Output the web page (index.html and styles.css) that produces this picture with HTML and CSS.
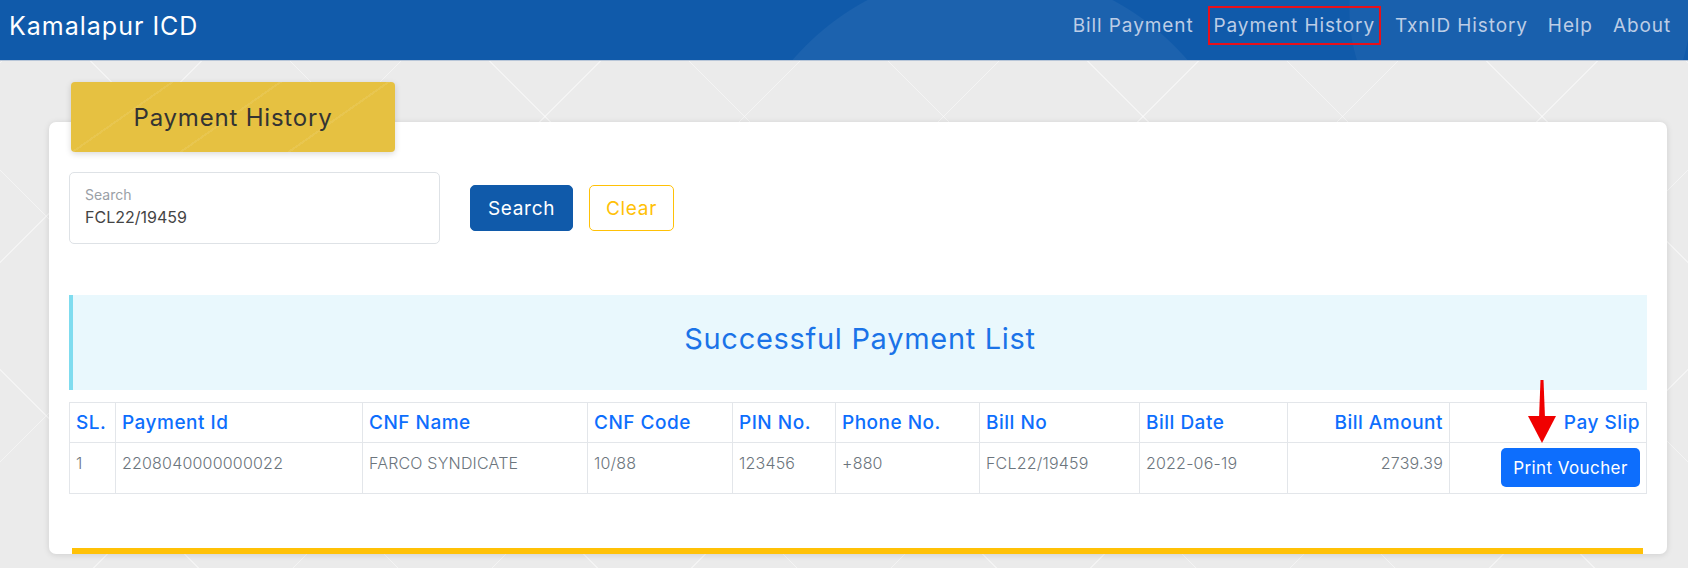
FILE: index.html
```html
<!DOCTYPE html>
<html lang="en">
    <head>
        <meta charset="UTF-8">
        <meta name="viewport" content="width=device-width, initial-scale=1.0">
        <title>Payment History - Kamalapur ICD</title>
        <link rel="stylesheet" href="styles.css">
    </head>
    <body>
        <nav class="navbar">
            <a class="brand" href="#">Kamalapur ICD</a>
            <ul class="nav-links">
                <li><a href="#">Bill Payment</a></li>
                <li><a href="#" class="current">Payment History</a></li>
                <li><a href="#">TxnID History</a></li>
                <li><a href="#">Help</a></li>
                <li><a href="#">About</a></li>
            </ul>
        </nav>

        <main class="page">
            <div class="card">
                <div class="card-tab">Payment History</div>

                <form class="search-row">
                    <div class="float-field">
                        <label for="q">Search</label>
                        <input id="q" type="text" value="FCL22/19459">
                    </div>
                    <button type="button" class="btn btn-search">Search</button>
                    <button type="button" class="btn btn-clear">Clear</button>
                </form>

                <div class="alert-title">Successful Payment List</div>

                <div class="table-wrap">
                    <table class="pay-table">
                        <colgroup>
                            <col class="c-sl">
                            <col class="c-id">
                            <col class="c-name">
                            <col class="c-code">
                            <col class="c-pin">
                            <col class="c-phone">
                            <col class="c-bill">
                            <col class="c-date">
                            <col class="c-amount">
                            <col class="c-slip">
                        </colgroup>
                        <thead>
                            <tr>
                                <th>SL.</th>
                                <th>Payment Id</th>
                                <th>CNF Name</th>
                                <th>CNF Code</th>
                                <th>PIN No.</th>
                                <th>Phone No.</th>
                                <th>Bill No</th>
                                <th>Bill Date</th>
                                <th class="right">Bill Amount</th>
                                <th class="right">Pay Slip</th>
                            </tr>
                        </thead>
                        <tbody>
                            <tr>
                                <td>1</td>
                                <td>2208040000000022</td>
                                <td>FARCO SYNDICATE</td>
                                <td>10/88</td>
                                <td>123456</td>
                                <td>+880</td>
                                <td>FCL22/19459</td>
                                <td>2022-06-19</td>
                                <td class="right">2739.39</td>
                                <td class="right"><button type="button" class="btn-voucher">Print Voucher</button></td>
                            </tr>
                        </tbody>
                    </table>

                    <!-- red pointer annotation -->
                    <svg class="pointer" width="28" height="63" viewBox="0 0 28 63">
                        <polygon points="12.5,0 15.5,0 17,38 11,38" fill="#f00000"/>
                        <polygon points="0,36 28,36 14,63" fill="#f00000"/>
                    </svg>
                </div>

                <div class="card-bar"></div>
            </div>
        </main>
    </body>
</html>
```

FILE: styles.css
```css
body {
    margin: 0;
    font-family: Inter, "Open Sans", sans-serif;
    background-color: #ebebeb;
    background-image:
        repeating-linear-gradient(45deg, transparent 0 140px, rgba(255, 255, 255, 0.45) 140px 141px),
        repeating-linear-gradient(-45deg, transparent 0 140px, rgba(255, 255, 255, 0.45) 140px 141px);
    height: 568px;
    overflow: hidden;
}

/* top bar */
.navbar {
    height: 61px;
    box-sizing: border-box;
    display: flex;
    align-items: center;
    justify-content: space-between;
    padding: 0 11px 9px 9px;
    background-color: #105aaa;
    background-image:
        radial-gradient(circle at 990px 230px, rgba(255, 255, 255, 0.05) 0 260px, transparent 261px),
        radial-gradient(circle at 1520px 10px, rgba(255, 255, 255, 0.04) 0 170px, transparent 171px);
    border-bottom: 1px solid #b8c6d8;
}
.brand {
    color: #fff;
    font-size: 25px;
    letter-spacing: 1px;
    text-decoration: none;
}
.nav-links {
    list-style: none;
    display: flex;
    align-items: center;
    gap: 8px;
    margin: 0;
    padding: 0;
}
.nav-links a {
    display: block;
    color: #bccde6;
    font-size: 19px;
    letter-spacing: 0.9px;
    text-decoration: none;
    padding: 6px 4px;
    border: 2px solid transparent;
}
.nav-links a.current {
    border-color: #e8101a;
}

/* page + card */
.page {
    padding: 61px 21px 0 49px;
}
.card {
    background: #fff;
    border-radius: 7px;
    box-shadow: 0 1px 6px rgba(0, 0, 0, 0.12);
    padding: 0 20px;
    height: 432px;
    box-sizing: border-box;
    display: flex;
    flex-direction: column;
}
.card-tab {
    align-self: flex-start;
    margin: -40px 0 0 2px;
    width: 324px;
    height: 70px;
    display: flex;
    align-items: center;
    justify-content: center;
    background-color: #e6c141;
    background-image: repeating-linear-gradient(-35deg, transparent 0 60px, rgba(255, 255, 255, 0.08) 60px 62px);
    border-radius: 4px;
    box-shadow: 0 2px 6px rgba(0, 0, 0, 0.15);
    color: #333;
    font-size: 24px;
    letter-spacing: 0.8px;
}

/* search */
.search-row {
    display: flex;
    align-items: center;
    margin-top: 20px;
}
.float-field {
    width: 371px;
    height: 72px;
    box-sizing: border-box;
    border: 1px solid #dee2e6;
    border-radius: 5px;
    padding: 12px 15px 0;
    display: flex;
    flex-direction: column;
}
.float-field label {
    font-size: 14px;
    color: #9aa0a6;
    line-height: 20px;
}
.float-field input {
    border: none;
    outline: none;
    padding: 0;
    font-family: inherit;
    font-size: 16px;
    color: #444;
    line-height: 24px;
}
.btn {
    height: 46px;
    box-sizing: border-box;
    border-radius: 5px;
    font-family: inherit;
    font-size: 19px;
    letter-spacing: 0.7px;
    padding: 0;
    cursor: pointer;
}
.btn-search {
    margin-left: 30px;
    width: 103px;
    background: #105aaa;
    border: 1px solid #105aaa;
    color: #fff;
}
.btn-clear {
    margin-left: 16px;
    width: 85px;
    background: #fff;
    border: 1px solid #ffc107;
    color: #ffc107;
}

/* list heading */
.alert-title {
    margin-top: 51px;
    height: 95px;
    box-sizing: border-box;
    padding-bottom: 8px;
    display: flex;
    align-items: center;
    justify-content: center;
    background: #e9f8fd;
    border-left: 4px solid #7fdcef;
    color: #1a73e8;
    font-size: 29px;
    letter-spacing: 0.7px;
}

/* table */
.table-wrap {
    position: relative;
    margin-top: 12px;
}
.pay-table {
    width: 100%;
    table-layout: fixed;
    border-collapse: collapse;
    font-size: 16px;
}
.c-sl { width: 46px; }
.c-id { width: 247px; }
.c-name { width: 225px; }
.c-code { width: 145px; }
.c-pin { width: 103px; }
.c-phone { width: 144px; }
.c-bill { width: 160px; }
.c-date { width: 148px; }
.c-amount { width: 162px; }
.c-slip { width: 197px; }
.pay-table th,
.pay-table td {
    border: 1px solid #e3e6ea;
    text-align: left;
    vertical-align: top;
    white-space: nowrap;
}
.pay-table th {
    height: 40px;
    box-sizing: border-box;
    padding: 8px 6px 0;
    color: #0d6efd;
    font-weight: 500;
    font-size: 19px;
    letter-spacing: 0.5px;
}
.pay-table td {
    height: 51px;
    box-sizing: border-box;
    padding: 10px 6px 0;
    color: #6c757d;
    font-weight: 300;
    letter-spacing: 0.2px;
}
.pay-table .right {
    text-align: right;
}
.pay-table td.right:last-child {
    padding-top: 5px;
}
.btn-voucher {
    width: 139px;
    height: 39px;
    border: none;
    border-radius: 5px;
    background: #0d6efd;
    color: #fff;
    font-family: inherit;
    font-size: 17px;
    letter-spacing: 0.4px;
    cursor: pointer;
}
.pointer {
    position: absolute;
    left: 1459px;
    top: -22px;
}

.card-bar {
    margin: auto 4px 0 3px;
    height: 6px;
    background: #ffc107;
}
```
